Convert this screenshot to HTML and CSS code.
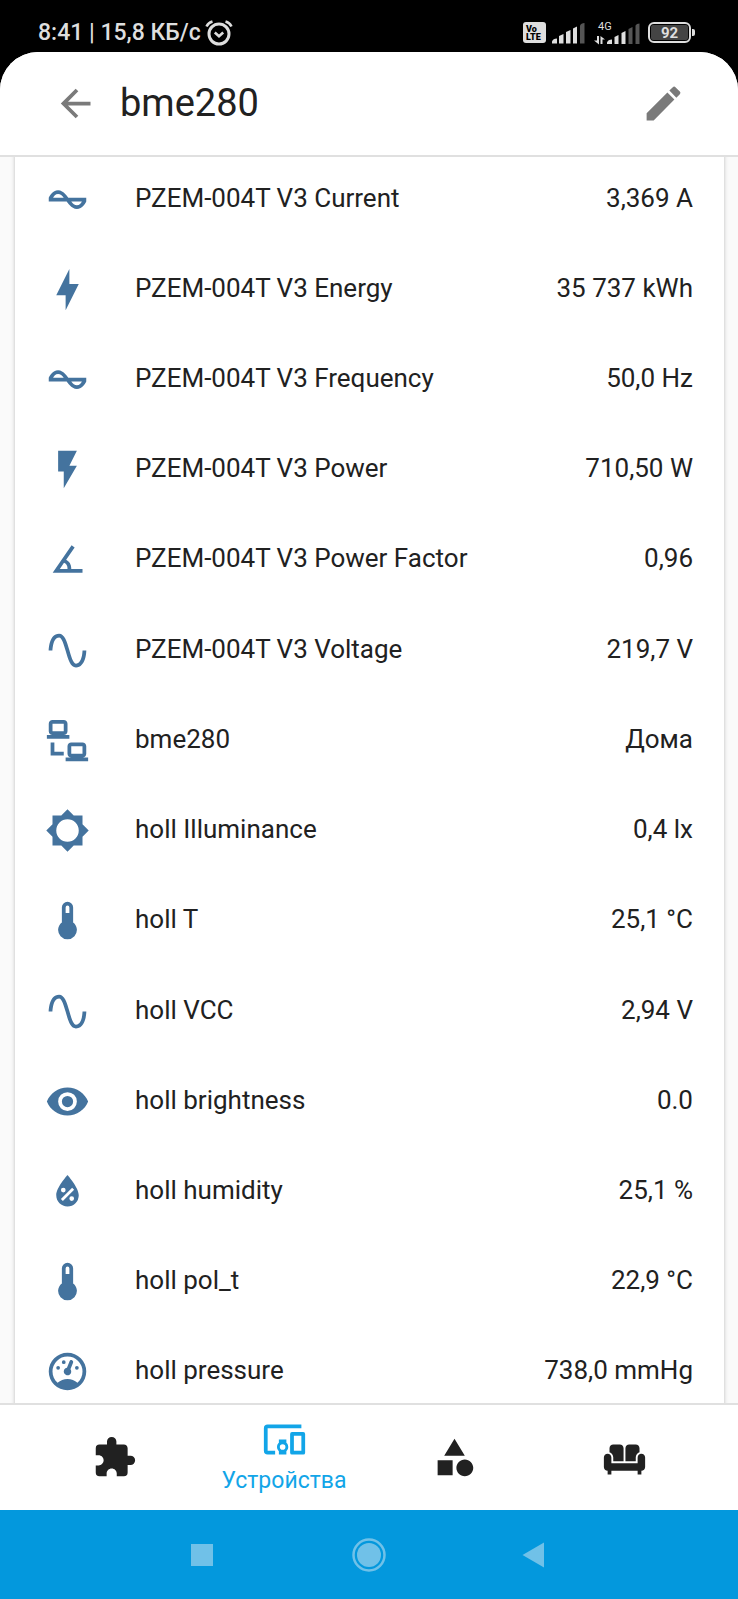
FILE: index.html
```html
<!DOCTYPE html>
<html lang="ru">
<head>
<meta charset="utf-8">
<meta name="viewport" content="width=device-width, initial-scale=1">
<title>bme280</title>
<link rel="stylesheet" href="styles.css">
</head>
<body>
<svg class="sprite" aria-hidden="true">
  <symbol id="current" viewBox="0 0 24 24"><path d="M12.43 11C12.28 10.84 10 7 7 7S2.32 10.18 2 11V13H11.57C11.72 13.16 14 17 17 17S21.68 13.82 22 13V11H12.43M7 9C8.17 9 9.18 9.85 10 11H4.31C4.78 10.17 5.54 9 7 9M17 15C15.83 15 14.82 14.15 14 13H19.69C19.22 13.83 18.46 15 17 15Z"/></symbol>
  <symbol id="bolt" viewBox="0 0 24 24"><path d="M11 15H6L13 1V9H18L11 23V15Z"/></symbol>
  <symbol id="flash" viewBox="0 0 24 24"><path d="M7,2V13H10V22L17,10H13L17,2H7Z"/></symbol>
  <symbol id="angle" viewBox="0 0 24 24"><path d="M20,19H4.09L14.18,4.43L15.82,5.57L11.28,12.13C12.89,12.96 14,14.62 14,16.54C14,16.7 14,16.85 13.97,17H20V19M7.91,17H11.96C12,16.85 12,16.7 12,16.54C12,15.28 11.24,14.22 10.14,13.77L7.91,17Z"/></symbol>
  <symbol id="sine" viewBox="0 0 24 24"><path d="M16.5,21C13.5,21 12.31,16.76 11.05,12.28C10.14,9.04 9,5 7.5,5C4.11,5 4,11.93 4,12H2C2,11.63 2.06,3 7.5,3C10.5,3 11.71,7.25 12.97,11.74C13.83,14.8 15,19 16.5,19C19.94,19 20.03,12.07 20.03,12H22.03C22.03,12.37 21.97,21 16.5,21Z"/></symbol>
  <symbol id="lan" viewBox="0 0 24 24"><path d="M4,1C2.89,1 2,1.89 2,3V7C2,8.11 2.89,9 4,9H1V11H13V9H10C11.11,9 12,8.11 12,7V3C12,1.89 11.11,1 10,1H4M4,3H10V7H4V3M3,13V18L3,20H10V18H5V13H3M14,13C12.89,13 12,13.89 12,15V19C12,20.11 12.89,21 14,21H11V23H23V21H20C21.11,21 22,20.11 22,19V15C22,13.89 21.11,13 20,13H14M14,15H20V19H14V15Z"/></symbol>
  <symbol id="brightness" viewBox="0 0 24 24"><path d="M12,18A6,6 0 0,1 6,12A6,6 0 0,1 12,6A6,6 0 0,1 18,12A6,6 0 0,1 12,18M20,15.31L23.31,12L20,8.69V4H15.31L12,0.69L8.69,4H4V8.69L0.69,12L4,15.31V20H8.69L12,23.31L15.31,20H20V15.31Z"/></symbol>
  <symbol id="thermometer" viewBox="0 0 24 24"><path d="M15 13V5A3 3 0 0 0 9 5V13A5 5 0 1 0 15 13M12 4A1 1 0 0 1 13 5V8H11V5A1 1 0 0 1 12 4Z"/></symbol>
  <symbol id="eye" viewBox="0 0 24 24"><path d="M12,9A3,3 0 0,0 9,12A3,3 0 0,0 12,15A3,3 0 0,0 15,12A3,3 0 0,0 12,9M12,17A5,5 0 0,1 7,12A5,5 0 0,1 12,7A5,5 0 0,1 17,12A5,5 0 0,1 12,17M12,4.5C7,4.5 2.73,7.61 1,12C2.73,16.39 7,19.5 12,19.5C17,19.5 21.27,16.39 23,12C21.27,7.61 17,4.5 12,4.5Z"/></symbol>
  <symbol id="humidity" viewBox="0 0 24 24"><path fill-rule="evenodd" d="M12,3.25C12,3.25 6,10 6,14C6,17.32 8.69,20 12,20A6,6 0 0,0 18,14C18,10 12,3.25 12,3.25M14.47,9.97L15.53,11.03L9.53,17.03L8.47,15.97M9.75,10A1.25,1.25 0 0,1 11,11.25A1.25,1.25 0 0,1 9.75,12.5A1.25,1.25 0 0,1 8.5,11.25A1.25,1.25 0 0,1 9.75,10M14.25,14.5A1.25,1.25 0 0,1 15.5,15.75A1.25,1.25 0 0,1 14.25,17A1.25,1.25 0 0,1 13,15.75A1.25,1.25 0 0,1 14.25,14.5Z"/></symbol>
  <symbol id="gauge" viewBox="0 0 24 24"><path d="M12,2A10,10 0 0,0 2,12A10,10 0 0,0 12,22A10,10 0 0,0 22,12A10,10 0 0,0 12,2M12,4A8,8 0 0,1 20,12C20,14.4 19,16.5 17.3,18C15.9,16.7 14,16 12,16C10,16 8.2,16.7 6.7,18C5,16.5 4,14.4 4,12A8,8 0 0,1 12,4M14,5.89C13.62,5.9 13.26,6.15 13.1,6.54L11.81,9.77L11.71,10C11,10.13 10.41,10.6 10.14,11.26C9.73,12.29 10.23,13.45 11.26,13.86C12.29,14.27 13.45,13.77 13.86,12.74C14.12,12.08 14,11.32 13.57,10.76L13.67,10.5L14.96,7.29L14.97,7.26C15.17,6.75 14.92,6.17 14.41,5.96C14.28,5.91 14.15,5.89 14,5.89M10,6A1,1 0 0,0 9,7A1,1 0 0,0 10,8A1,1 0 0,0 11,7A1,1 0 0,0 10,6M7,9A1,1 0 0,0 6,10A1,1 0 0,0 7,11A1,1 0 0,0 8,10A1,1 0 0,0 7,9M17,9A1,1 0 0,0 16,10A1,1 0 0,0 17,11A1,1 0 0,0 18,10A1,1 0 0,0 17,9Z"/></symbol>
</svg>

<div class="phone">
  <div class="status">
    <div class="status-side">
      <span>8:41 | 15,8 КБ/с</span>
      <svg class="alarm" viewBox="0 0 28 26" aria-hidden="true" fill="none" stroke="currentColor">
        <circle cx="14" cy="14" r="10" stroke-width="3"/>
        <path d="M1.500 6.500Q3.500 2.800 7.500 1.600M26.500 6.500Q24.500 2.800 20.500 1.600" stroke-width="2.600"/>
        <path d="M9.800 12.500L14 16.200L18.200 12.500" stroke-width="2.600"/>
      </svg>
    </div>
    <div class="status-side status-icons">
      <div class="volte"><span>Vo</span><span>LTE</span></div>
      <svg class="signal" viewBox="0 0 34 22" aria-hidden="true" fill="currentColor">
        <path d="M0 21.500V19.500Q1 16.500 5 16.500V21.500ZM7 14L11.500 12V21.500H7ZM14 10L18.500 8V21.500H14ZM21 6.500L25 4.500V21.500H21Z"/>
        <path class="dim" d="M28 3.500Q29 1 32.500 1V21.500H28Z"/>
      </svg>
      <svg class="signal-data" viewBox="0 0 46 24" aria-hidden="true" fill="currentColor">
        <text class="net" x="4" y="9">4G</text>
        <path d="M3 15H5V23.500L0 19.500H3ZM6.500 23V15L11 18.500H8.500V23Z"/>
        <path d="M13 23V21.500Q14 18.500 18 18.500V23ZM20.500 16L24.500 14V23H20.500ZM27.500 12L31.500 10V23H27.500Z"/>
        <path class="dim" d="M34.500 8L38.500 6V23H34.500ZM41.500 4.500Q42.500 2.500 45.500 2.500V23H41.500Z"/>
      </svg>
      <div class="battery"><span>92</span></div>
    </div>
  </div>

  <div class="app">
    <header class="header">
      <button class="icon-button" aria-label="Назад"><svg class="icon" viewBox="0 0 24 24"><path d="M20,11V13H8L13.500,18.500L12.080,19.920L4.160,12L12.080,4.080L13.500,5.500L8,11H20Z"/></svg></button>
      <h1 class="title">bme280</h1>
      <button class="icon-button" aria-label="Изменить"><svg class="icon" viewBox="0 0 24 24"><path d="M20.710,7.040C21.100,6.650 21.100,6 20.710,5.630L18.370,3.290C18,2.900 17.350,2.900 16.960,3.290L15.120,5.120L18.870,8.870M3,17.250V21H6.750L17.810,9.930L14.060,6.180L3,17.250Z"/></svg></button>
    </header>

    <main class="content">
      <ul class="card">
        <li class="row"><svg class="icon"><use href="#current"/></svg><span class="name">PZEM-004T V3 Current</span><span class="value">3,369 A</span></li>
        <li class="row"><svg class="icon"><use href="#bolt"/></svg><span class="name">PZEM-004T V3 Energy</span><span class="value">35 737 kWh</span></li>
        <li class="row"><svg class="icon"><use href="#current"/></svg><span class="name">PZEM-004T V3 Frequency</span><span class="value">50,0 Hz</span></li>
        <li class="row"><svg class="icon"><use href="#flash"/></svg><span class="name">PZEM-004T V3 Power</span><span class="value">710,50 W</span></li>
        <li class="row"><svg class="icon"><use href="#angle"/></svg><span class="name">PZEM-004T V3 Power Factor</span><span class="value">0,96</span></li>
        <li class="row"><svg class="icon"><use href="#sine"/></svg><span class="name">PZEM-004T V3 Voltage</span><span class="value">219,7 V</span></li>
        <li class="row"><svg class="icon"><use href="#lan"/></svg><span class="name">bme280</span><span class="value">Дома</span></li>
        <li class="row"><svg class="icon"><use href="#brightness"/></svg><span class="name">holl Illuminance</span><span class="value">0,4 lx</span></li>
        <li class="row"><svg class="icon"><use href="#thermometer"/></svg><span class="name">holl T</span><span class="value">25,1 °C</span></li>
        <li class="row"><svg class="icon"><use href="#sine"/></svg><span class="name">holl VCC</span><span class="value">2,94 V</span></li>
        <li class="row"><svg class="icon"><use href="#eye"/></svg><span class="name">holl brightness</span><span class="value">0.0</span></li>
        <li class="row"><svg class="icon"><use href="#humidity"/></svg><span class="name">holl humidity</span><span class="value">25,1 %</span></li>
        <li class="row"><svg class="icon"><use href="#thermometer"/></svg><span class="name">holl pol_t</span><span class="value">22,9 °C</span></li>
        <li class="row"><svg class="icon"><use href="#gauge"/></svg><span class="name">holl pressure</span><span class="value">738,0 mmHg</span></li>
      </ul>
    </main>

    <nav class="tabs">
      <a class="tab" href="#integrations" aria-label="Интеграции"><svg class="icon" viewBox="0 0 24 24"><path d="M20.500,11H19V7C19,5.890 18.100,5 17,5H13V3.500A2.500,2.500 0 0,0 10.500,1A2.500,2.500 0 0,0 8,3.500V5H4A2,2 0 0,0 2,7V10.800H3.500C5,10.800 6.200,12 6.200,13.500C6.200,15 5,16.200 3.500,16.200H2V20A2,2 0 0,0 4,22H7.800V20.500C7.800,19 9,17.800 10.500,17.800C12,17.800 13.200,19 13.200,20.500V22H17A2,2 0 0,0 19,20V16H20.500A2.500,2.500 0 0,0 23,13.500A2.500,2.500 0 0,0 20.500,11Z"/></svg></a>
      <a class="tab tab-active" href="#devices" aria-current="page"><svg class="icon" viewBox="0 0 24 24"><path d="M3,6H21V4H3A2,2 0 0,0 1,6V18A2,2 0 0,0 3,20H7V18H3V6M13,12H9V13.780C8.390,14.330 8,15.110 8,16C8,16.890 8.390,17.670 9,18.220V20H13V18.220C13.610,17.670 14,16.880 14,16C14,15.120 13.610,14.330 13,13.780V12M11,17.500A1.500,1.500 0 0,1 9.500,16A1.500,1.500 0 0,1 11,14.500A1.500,1.500 0 0,1 12.500,16A1.500,1.500 0 0,1 11,17.500M22,8H16A1,1 0 0,0 15,9V19A1,1 0 0,0 16,20H22A1,1 0 0,0 23,19V9A1,1 0 0,0 22,8M21,18H17V10H21V18Z"/></svg><span class="tab-label">Устройства</span></a>
      <a class="tab" href="#entities" aria-label="Объекты"><svg class="icon" viewBox="0 0 24 24"><path d="M11,13.500V21.500H3V13.500H11M12,2L17.500,11H6.500L12,2M17.500,13C20,13 22,15 22,17.500C22,20 20,22 17.500,22C15,22 13,20 13,17.500C13,15 15,13 17.500,13Z"/></svg></a>
      <a class="tab" href="#areas" aria-label="Помещения"><svg class="icon" viewBox="0 0 24 24"><path d="M12.500 7C12.500 5.890 13.390 5 14.500 5H18C19.100 5 20 5.900 20 7V9.160C18.840 9.570 18 10.670 18 11.970V14H12.500V7M6 11.960V14H11.500V7C11.500 5.890 10.610 5 9.500 5H6C4.900 5 4 5.900 4 7V9.150C5.160 9.560 6 10.670 6 11.960M20.660 10.030C19.680 10.190 19 11.120 19 12.120V15H5V12C5 10.900 4.100 10 3 10S1 10.900 1 12V17C1 18.100 1.900 19 3 19V21H5V19H19V21H21V19C22.100 19 23 18.100 23 17V12C23 10.790 21.910 9.820 20.660 10.030Z"/></svg></a>
    </nav>
  </div>

  <div class="system-nav">
    <button class="system-button" aria-label="Недавние"><svg class="system-icon" viewBox="0 0 36 36"><rect x="7" y="7" width="22" height="22"/></svg></button>
    <button class="system-button" aria-label="Домой"><svg class="system-icon" viewBox="0 0 36 36"><circle cx="18" cy="18" r="12"/><circle cx="18" cy="18" r="15.500" fill="none" stroke="currentColor" stroke-width="2.500"/></svg></button>
    <button class="system-button" aria-label="Назад"><svg class="system-icon" viewBox="0 0 36 36"><path d="M4.500 18L26 5.500V30.500Z"/></svg></button>
  </div>
</div>
</body>
</html>
```

FILE: styles.css
```css
* {
  box-sizing: border-box;
}

body {
  margin: 0;
  background: #000;
  color: #212121;
  font-family: Roboto, "Noto Sans", sans-serif;
  font-size: 26px;
}

button {
  display: flex;
  padding: 0;
  border: 0;
  background: none;
  color: inherit;
}

.sprite {
  display: none;
}

.phone {
  display: flex;
  flex-direction: column;
  height: 100vh;
}

/* Status bar */
.status {
  display: flex;
  justify-content: space-between;
  flex: none;
  height: 52px;
  padding: 13px 43px 0 38px;
  color: #dedede;
}

.status-side {
  display: flex;
  align-items: center;
  gap: 4px;
  font-size: 23px;
  font-weight: 500;
}

.status-icons {
  gap: 8px;
}

.alarm {
  width: 28px;
  height: 26px;
}

.volte {
  display: flex;
  flex-direction: column;
  align-items: flex-start;
  justify-content: center;
  width: 23px;
  height: 21px;
  margin-right: -2px;
  padding-left: 3px;
  border-radius: 3px;
  background: #dedede;
  color: #000;
  font-size: 9px;
  font-weight: 900;
  line-height: 8px;
}

.signal {
  width: 34px;
  height: 22px;
}

.signal-data {
  width: 46px;
  height: 24px;
}

.dim {
  fill: #555;
}

.net {
  font-size: 11px;
  font-weight: 400;
}

.battery {
  position: relative;
  display: flex;
  width: 43px;
  height: 21px;
  margin-right: 4px;
  padding: 1px;
  border: 2px solid #dedede;
  border-radius: 6px;
}

.battery span {
  flex: 1;
  border-radius: 2px;
  background: #444;
  font-size: 15px;
  font-weight: 700;
  line-height: 16px;
  text-align: center;
}

.battery::after {
  content: "";
  position: absolute;
  top: 5px;
  right: -6px;
  width: 3px;
  height: 7px;
  border-radius: 0 2px 2px 0;
  background: #dedede;
}

/* App */
.app {
  display: flex;
  flex-direction: column;
  flex: 1;
  min-height: 0;
  overflow: hidden;
  border-radius: 38px 38px 0 0;
  background: #fafafa;
}

.icon {
  flex: none;
  width: 45px;
  height: 45px;
  fill: currentColor;
}

.header {
  display: flex;
  align-items: center;
  gap: 22px;
  flex: none;
  height: 105px;
  padding: 0 52px 0 53px;
  border-bottom: 2px solid #e0e0e0;
  background: #fff;
}

.icon-button {
  color: #7a7a7a;
}

.title {
  flex: 1;
  margin: 0;
  padding-bottom: 1px;
  font-size: 38px;
  font-weight: 400;
  line-height: 48px;
}

.content {
  display: flex;
  flex-direction: column;
  flex: 1;
  min-height: 0;
  padding: 0 14px 0 15px;
  overflow: hidden;
}

/* The list is scrolled so that its first and last rows run under the bars */
.card {
  display: flex;
  flex-direction: column;
  flex: 1 0 auto;
  margin: -3px 0 -14px;
  padding: 0;
  background: #fff;
  box-shadow: 0 0 4px rgba(0, 0, 0, 0.25);
  list-style: none;
}

.row {
  display: flex;
  align-items: center;
  gap: 45px;
  flex: 1 0 90px;
  padding: 0 31px 0 30px;
}

.row .icon {
  color: #44739e;
}

.name,
.value {
  padding-bottom: 3px;
  line-height: 36px;
}

.name {
  flex: 1;
}

.value {
  text-align: right;
}

/* Tabs */
.tabs {
  display: flex;
  flex: none;
  height: 107px;
  padding: 0 29px;
  border-top: 2px solid #e0e0e0;
  background: #fff;
}

.tab {
  display: flex;
  flex: 1;
  flex-direction: column;
  align-items: center;
  justify-content: center;
  color: #212121;
  text-decoration: none;
}

.tab-active {
  color: #12a5e8;
}

.tab-label {
  font-size: 23px;
  line-height: 37px;
}

/* System navigation */
.system-nav {
  display: flex;
  justify-content: center;
  flex: none;
  height: 89px;
  background: #0398dd;
}

.system-button {
  align-items: center;
  justify-content: center;
  width: 167px;
  color: #70c1e8;
}

.system-icon {
  width: 36px;
  height: 36px;
  fill: currentColor;
}
```
